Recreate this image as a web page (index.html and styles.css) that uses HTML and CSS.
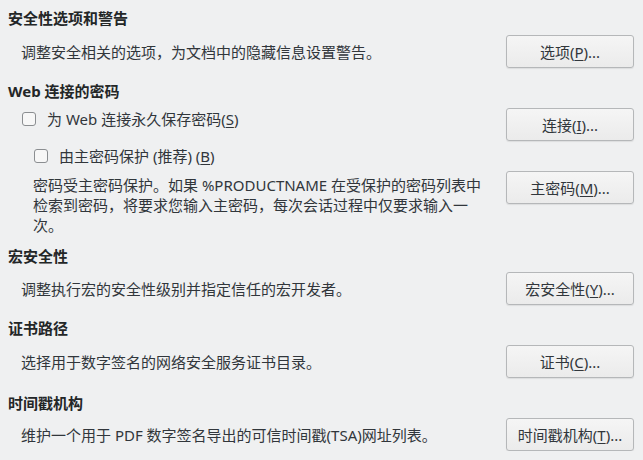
FILE: index.html
```html
<!DOCTYPE html>
<html lang="zh-CN">
<head>
<meta charset="utf-8">
<title>安全性</title>
<link rel="stylesheet" href="styles.css">
</head>
<body>
<div class="page">
  <section class="sec">
    <h2 class="hd first">安全性选项和警告</h2>
    <div class="row">
      <p class="desc">调整安全相关的选项，为文档中的隐藏信息设置警告。</p>
      <button class="btn">选项(<u>P</u>)...</button>
    </div>
  </section>

  <section class="sec">
    <h2 class="hd">Web 连接的密码</h2>
    <div class="web">
      <label class="chk c1"><span class="box"></span><span>为 Web 连接永久保存密码(<u>S</u>)</span></label>
      <button class="btn b1">连接(<u>I</u>)...</button>
      <label class="chk c2"><span class="box"></span><span>由主密码保护 (推荐) (<u>B</u>)</span></label>
      <p class="para">密码受主密码保护。如果 %PRODUCTNAME 在受保护的密码列表中检索到密码，将要求您输入主密码，每次会话过程中仅要求输入一次。</p>
      <button class="btn b3">主密码(<u>M</u>)...</button>
    </div>
  </section>

  <section class="sec">
    <h2 class="hd h3">宏安全性</h2>
    <div class="row r3">
      <p class="desc">调整执行宏的安全性级别并指定信任的宏开发者。</p>
      <button class="btn">宏安全性(<u>Y</u>)...</button>
    </div>
  </section>

  <section class="sec">
    <h2 class="hd">证书路径</h2>
    <div class="row">
      <p class="desc">选择用于数字签名的网络安全服务证书目录。</p>
      <button class="btn">证书(<u>C</u>)...</button>
    </div>
  </section>

  <section class="sec">
    <h2 class="hd h5">时间戳机构</h2>
    <div class="row r5">
      <p class="desc">维护一个用于 PDF 数字签名导出的可信时间戳(TSA)网址列表。</p>
      <button class="btn">时间戳机构(<u>T</u>)...</button>
    </div>
  </section>
</div>
</body>
</html>
```

FILE: styles.css
```css
html, body {
  margin: 0;
  padding: 0;
  background: #eff0f1;
}

body {
  font-family: "Noto Sans", "Noto Sans CJK SC", sans-serif;
  font-size: 15px;
  line-height: 20px;
  color: #31363b;
}

.page {
  padding: 8px 9px 0 8px;
}

.hd {
  margin: 13px 0 0;
  font-size: 15px;
  line-height: 20px;
  font-weight: bold;
  color: #232627;
}

.hd.first { margin-top: 0; }
.hd.h3 { margin-top: 11px; }
.hd.h5 { margin-top: 15px; }

.row {
  margin: 7px 0 0 13px;
  display: grid;
  grid-template-columns: 1fr 128px;
  column-gap: 26px;
  align-items: center;
}

.row.r3 { margin-top: 6px; }
.row.r5 { margin-top: 5px; }

.desc {
  margin: 0;
}

.btn {
  height: 33px;
  width: 128px;
  padding: 0 4px;
  box-sizing: border-box;
  font: inherit;
  color: #31363b;
  background: linear-gradient(#f5f5f5, #ebebeb);
  border: 1px solid #b5b7b9;
  border-radius: 3px;
  box-shadow: 0 1px 1px rgba(0, 0, 0, 0.08);
  text-align: center;
  white-space: nowrap;
}

.btn u {
  text-underline-offset: 2px;
}

.web {
  margin: 7px 0 0 13px;
  display: grid;
  grid-template-columns: 1fr 128px;
  grid-template-rows: 33px 30px auto;
  column-gap: 16px;
}

.chk {
  display: flex;
  align-items: center;
  gap: 11px;
  height: 20px;
}

.chk u { text-underline-offset: 2px; }

.c1 {
  grid-column: 1;
  grid-row: 1;
  align-self: start;
  margin: 1px 0 0 1px;
}

.c2 {
  grid-column: 1;
  grid-row: 2;
  align-self: center;
  margin: 0 0 0 13px;
}

.box {
  width: 14px;
  height: 14px;
  box-sizing: border-box;
  border: 1px solid #8b8e91;
  border-radius: 3px;
  background: #f7f7f7;
  flex: none;
}

.b1 { grid-column: 2; grid-row: 1; }

.para {
  grid-column: 1;
  grid-row: 3;
  margin: 4px 0 0 12px;
}

.b3 {
  grid-column: 2;
  grid-row: 3;
  align-self: start;
}
```
